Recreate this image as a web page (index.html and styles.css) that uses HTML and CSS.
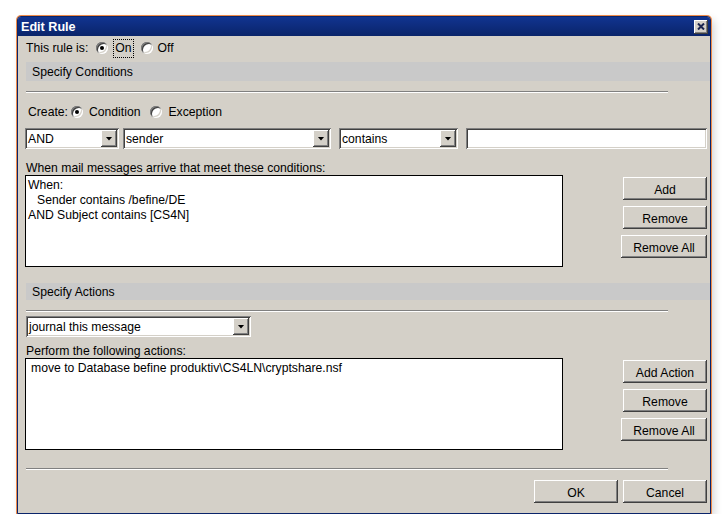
FILE: index.html
```html
<!DOCTYPE html>
<html>
<head>
    <meta charset="utf-8" />
    <title>Edit Rule</title>
    <link rel="stylesheet" href="styles.css">
</head>
<body>
    <div class="window">
        <div class="titlebar">
            <span class="title">Edit Rule</span>
            <span class="close">
                <svg width="8" height="7" viewBox="0 0 8 7"><path d="M1 0.5 L7 6.5 M7 0.5 L1 6.5" stroke="#1b2550" stroke-width="2" /></svg>
            </span>
        </div>
        <div class="content">
            <div class="row status">
                <span>This rule is:</span>
                <span class="radio checked r-first"></span>
                <span class="focus">On</span>
                <span class="radio r-next"></span>
                <span class="radio-label">Off</span>
            </div>

            <div class="band">Specify Conditions</div>
            <div class="sep"></div>

            <div class="row create">
                <span>Create:</span>
                <span class="radio checked r-create"></span>
                <span class="radio-label">Condition</span>
                <span class="radio r-wide"></span>
                <span class="radio-label">Exception</span>
            </div>

            <div class="fields">
                <div class="combo c-and"><span class="combo-text">AND</span><span class="combo-arrow"></span></div>
                <div class="combo c-field"><span class="combo-text">sender</span><span class="combo-arrow"></span></div>
                <div class="combo c-op"><span class="combo-text">contains</span><span class="combo-arrow"></span></div>
                <div class="textbox"></div>
            </div>

            <div class="label">When mail messages arrive that meet these conditions:</div>
            <div class="listarea">
                <div class="list">
                    <div>When:</div>
                    <div class="indent">Sender contains /befine/DE</div>
                    <div>AND Subject contains [CS4N]</div>
                </div>
                <div class="buttons">
                    <button class="btn">Add</button>
                    <button class="btn">Remove</button>
                    <button class="btn btn-wide">Remove All</button>
                </div>
            </div>

            <div class="band band-2">Specify Actions</div>
            <div class="sep"></div>

            <div class="combo c-action"><span class="combo-text">journal this message</span><span class="combo-arrow"></span></div>

            <div class="label label-2">Perform the following actions:</div>
            <div class="listarea">
                <div class="list">
                    <div class="action">move to Database befine produktiv\CS4LN\cryptshare.nsf</div>
                </div>
                <div class="buttons">
                    <button class="btn">Add Action</button>
                    <button class="btn">Remove</button>
                    <button class="btn btn-wide">Remove All</button>
                </div>
            </div>

            <div class="sep sep-last"></div>

            <div class="footer">
                <button class="btn">OK</button>
                <button class="btn">Cancel</button>
            </div>
        </div>
    </div>
</body>
</html>
```

FILE: styles.css
```css
body {
    margin: 0;
    background: #fff;
    font-family: "Liberation Sans", Arial, sans-serif;
    font-size: 12.2px;
    color: #000;
}

.window {
    margin: 16px 0 0 17px;
    width: 692px;
    height: 496px;
    border: 1px solid #0a246a;
    border-radius: 4px 4px 0 0;
    box-shadow: 0 0 0 1px #ee8a48, 3px 4px 8px rgba(0, 0, 0, 0.18);
    background: #d4d0c8;
    display: flex;
    flex-direction: column;
}

.titlebar {
    height: 19px;
    background: linear-gradient(#113490, #0a246a);
    display: flex;
    align-items: center;
    justify-content: space-between;
    padding: 0 2px 0 3px;
    border-radius: 3px 3px 0 0;
}

.title {
    color: #fff;
    font-weight: bold;
    font-size: 12.6px;
    padding-top: 1px;
}

.close {
    width: 14px;
    height: 14px;
    box-sizing: border-box;
    background: #d4d0c8;
    box-shadow: inset -1px -1px #404040, inset 1px 1px #fff, inset -2px -2px #808080;
    display: flex;
    align-items: center;
    justify-content: center;
}

.content {
    flex: 1;
    padding: 1px 3px 0 7px;
}

.row {
    height: 20px;
    box-sizing: border-box;
    padding-top: 2px;
    display: flex;
    align-items: center;
}

.status {
    margin-left: 1px;
}

.create {
    margin-top: 8px;
    margin-left: 3px;
}

.radio {
    width: 12px;
    height: 12px;
    box-sizing: border-box;
    border-radius: 50%;
    background: #fff;
    box-shadow: inset 1px 1px #808080, inset -1px -1px #fff, inset 2px 2px #404040, inset -2px -2px #d4d0c8;
    display: flex;
    align-items: center;
    justify-content: center;
}

.radio.checked::after {
    content: "";
    width: 4px;
    height: 4px;
    border-radius: 50%;
    background: #000;
}

.r-first { margin-left: 8px; }
.r-next { margin-left: 7px; }
.r-create { margin-left: 3px; }
.r-wide { margin-left: 10px; }

.radio-label {
    margin-left: 6px;
}

.status .radio-label {
    margin-left: 5px;
}

.focus {
    margin-left: 5px;
    border: 1px dotted #000;
    line-height: 17px;
    padding: 0 1px;
}

.band {
    margin: 5px -3px 0 1px;
    height: 19px;
    box-sizing: border-box;
    padding: 2px 0 0 6px;
    line-height: 17px;
    background: #c9c9c9;
}

.band-2 {
    margin-top: 16px;
    height: 17px;
    line-height: 15px;
}

.sep {
    margin: 10px 0 0 1px;
    width: 642px;
    border-top: 1px solid #808080;
    border-bottom: 1px solid #fff;
}

.sep-last {
    margin-top: 18px;
}

.fields {
    margin-top: 7px;
    display: flex;
}

.combo {
    height: 21px;
    box-sizing: border-box;
    padding: 2px;
    background: #fff;
    box-shadow: inset 1px 1px #808080, inset -1px -1px #fff, inset 2px 2px #404040, inset -2px -2px #d4d0c8;
    display: flex;
}

.combo-text {
    flex: 1;
    padding: 1px 0 0 1px;
    line-height: 16px;
    white-space: nowrap;
}

.combo-arrow {
    width: 16px;
    background: #d4d0c8;
    box-shadow: inset -1px -1px #404040, inset 1px 1px #fff, inset -2px -2px #808080;
    display: flex;
    align-items: center;
    justify-content: center;
}

.combo-arrow::before {
    content: "";
    width: 7px;
    height: 4px;
    background: #000;
    clip-path: polygon(0 0, 100% 0, 50% 100%);
}

.c-and { width: 94px; }
.c-field { width: 208px; margin-left: 4px; }
.c-op { width: 119px; margin-left: 8px; }

.c-action {
    width: 225px;
    margin: 4px 0 0 1px;
}

.textbox {
    flex: 1;
    margin-left: 8px;
    height: 21px;
    background: #fff;
    box-shadow: inset 1px 1px #808080, inset -1px -1px #fff, inset 2px 2px #404040, inset -2px -2px #d4d0c8;
}

.label {
    margin: 12px 0 0 1px;
    height: 14px;
    box-sizing: border-box;
    padding-top: 1px;
    line-height: 13px;
}

.label-2 {
    margin-top: 7px;
}

.listarea {
    height: 92px;
    display: flex;
}

.list {
    width: 538px;
    box-sizing: border-box;
    border: 1px solid #000;
    background: #fff;
    padding: 2px 2px;
    line-height: 15px;
}

.indent {
    padding-left: 9px;
}

.action {
    padding-left: 3px;
}

.buttons {
    margin-left: auto;
    padding-top: 2px;
    display: flex;
    flex-direction: column;
    align-items: flex-end;
    gap: 6px;
}

.btn {
    width: 84px;
    height: 23px;
    padding: 2px 0 0;
    border: none;
    background: #d4d0c8;
    box-shadow: inset -1px -1px #404040, inset 1px 1px #fff, inset -2px -2px #808080;
    font-family: "Liberation Sans", Arial, sans-serif;
    font-size: 12.2px;
    color: #000;
}

.btn-wide {
    width: 86px;
}

.footer {
    margin-top: 10px;
    display: flex;
    justify-content: flex-end;
    gap: 5px;
}
```
